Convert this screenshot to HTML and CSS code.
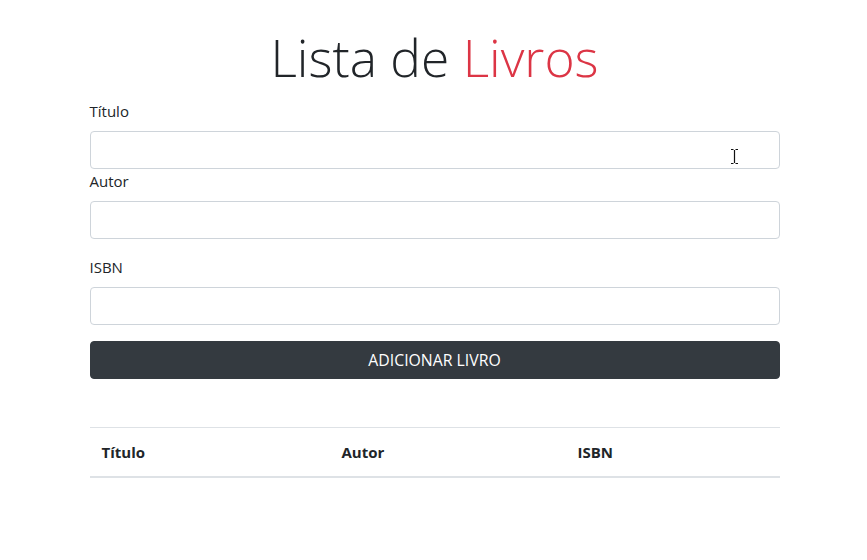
FILE: index.html
```html
<!DOCTYPE html>
<html lang="pt">
<head>
<meta charset="utf-8">
<title>Lista de Livros</title>
<link rel="stylesheet" href="styles.css">
</head>
<body>
<div class="container">
  <h1 class="title">Lista de <span class="danger">Livros</span></h1>
  <form class="book-form">
    <div class="group first">
      <label class="label">Título</label>
      <div class="input-wrap">
        <input class="input" type="text">
        <svg class="cursor" width="9" height="17" viewBox="0 0 9 17"><path d="M1 1.5h2.5M5.5 1.5H8M4.5 2v13M1 15.5h2.5M5.5 15.5H8" stroke="#111" stroke-width="1.2" fill="none"/></svg>
      </div>
    </div>
    <div class="group">
      <label class="label">Autor</label>
      <input class="input" type="text">
    </div>
    <div class="group">
      <label class="label">ISBN</label>
      <input class="input" type="text">
    </div>
    <button class="btn" type="button">ADICIONAR LIVRO</button>
  </form>
  <table class="table">
    <thead>
      <tr>
        <th class="col1">Título</th>
        <th class="col2">Autor</th>
        <th>ISBN</th>
      </tr>
    </thead>
    <tbody></tbody>
  </table>
</div>
</body>
</html>
```
FILE: styles.css
```css
* { box-sizing: border-box; }
body {
  margin: 0;
  font-family: "Open Sans", "Noto Sans", sans-serif;
  font-size: 15px;
  line-height: 24px;
  color: #212529;
  background: #fff;
}
.container {
  width: 720px;
  margin: 0 auto;
  padding: 24px 14px 0 16px;
}
.title {
  margin: 0 0 8px;
  text-align: center;
  font-weight: 300;
  font-size: 51.5px;
  line-height: 67px;
  color: #212529;
}
.danger { color: #dc3545; }
.book-form { display: flex; flex-direction: column; }
.group { display: flex; flex-direction: column; margin-bottom: 16px; }
.group.first { margin-bottom: 0; }
.label { display: block; margin-bottom: 8px; }
.input-wrap { position: relative; }
.input {
  display: block;
  width: 100%;
  height: 38px;
  padding: 6px 12px;
  font: inherit;
  color: #495057;
  background: #fff;
  border: 1px solid #ced4da;
  border-radius: 4px;
}
.cursor { position: absolute; left: 640px; top: 17px; }
.btn {
  display: block;
  width: 100%;
  height: 38px;
  padding: 6px 12px;
  font: inherit;
  font-size: 15.8px;
  color: #fff;
  background: #343a40;
  border: 1px solid #343a40;
  border-radius: 4px;
}
.table {
  width: 100%;
  margin-top: 48px;
  border-collapse: collapse;
}
.table th {
  text-align: left;
  font-weight: 700;
  padding: 12px;
  vertical-align: bottom;
  border-top: 1px solid #dee2e6;
  border-bottom: 2px solid #dee2e6;
}
.col1 { width: 240px; }
.col2 { width: 236px; }
```
